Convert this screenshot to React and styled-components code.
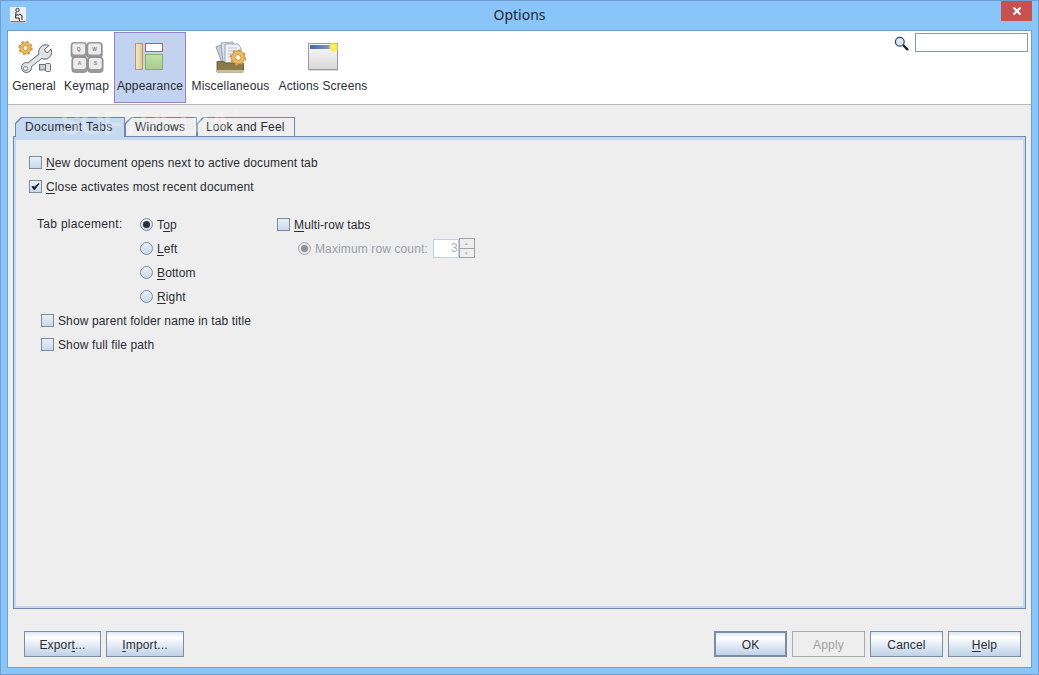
import React from "react";
import styled, { createGlobalStyle } from "styled-components";

const GlobalStyle = createGlobalStyle`
  html, body { margin: 0; padding: 0; height: 100%; overflow: hidden; }
  #root { height: 100%; }
  * { box-sizing: border-box; }
`;

const Window = styled.div`
  width: 1039px;
  height: 675px;
  display: flex;
  flex-direction: column;
  background: #8ac5fa;
  border: 1px solid #6f9fd2;
  font-family: "Liberation Sans", Arial, sans-serif;
  font-size: 12px;
  color: #2b2b33;
`;

const TitleBar = styled.div`
  height: 29px;
  flex: none;
  display: grid;
  grid-template-columns: 1fr auto 1fr;
  align-items: start;
`;

const AppIcon = styled.svg`
  width: 16px;
  height: 16px;
  margin: 6px 0 0 9px;
  display: block;
`;

const Title = styled.div`
  font-family: "Noto Sans", sans-serif;
  font-size: 14px;
  line-height: 28px;
  color: #1c2530;
`;

const CloseButton = styled.div`
  justify-self: end;
  width: 31px;
  height: 20px;
  margin-right: 6px;
  background: #c75050;
  display: flex;
  align-items: center;
  justify-content: center;
`;

const Content = styled.div`
  flex: 1;
  margin: 0 6px 6px 6px;
  border: 1px solid #6c9fd0;
  background: #eeeeee;
  display: flex;
  flex-direction: column;
  min-height: 0;
`;

const Toolbar = styled.div`
  height: 74px;
  flex: none;
  display: flex;
  background: #ffffff;
  border-bottom: 1px solid #b9b9b9;
  padding: 1px 3px 0 0;
`;

const ToolItem = styled.div`
  width: ${(p) => p.$w}px;
  height: 71px;
  margin-right: ${(p) => p.$mr || 0}px;
  display: flex;
  flex-direction: column;
  align-items: center;
  border: 1px solid ${(p) => (p.$active ? "#9a7fc9" : "transparent")};
  background: ${(p) => (p.$active ? "#c1d3ee" : "transparent")};
`;

const ToolIcon = styled.svg`
  width: 36px;
  height: 36px;
  margin-top: 7px;
  display: block;
`;

const ToolLabel = styled.div`
  margin-top: 2px;
  line-height: 16px;
  white-space: nowrap;
  letter-spacing: 0.15px;
`;

const SearchBox = styled.div`
  margin-left: auto;
  display: flex;
  align-items: flex-start;
  gap: 6px;
  padding-top: 1px;
`;

const SearchIcon = styled.svg`
  width: 15px;
  height: 15px;
  margin-top: 3px;
  display: block;
`;

const SearchInput = styled.div`
  width: 113px;
  height: 19px;
  background: #fff;
  border: 1px solid #8b99a5;
`;

const Main = styled.div`
  flex: 1;
  display: flex;
  flex-direction: column;
  position: relative;
  padding: 12px 5px 0 5px;
  min-height: 0;
`;

const Watermark = styled.div`
  position: absolute;
  left: 52px;
  top: 0;
  font-size: 32px;
  font-weight: 700;
  letter-spacing: -1.5px;
  color: rgba(255, 255, 255, 0.3);
  pointer-events: none;
  z-index: 3;
`;

const WatermarkMark = styled.span`
  font-size: 9px;
  font-weight: 400;
  letter-spacing: 0;
  vertical-align: 18px;
  margin-left: 3px;
`;

const TabStrip = styled.div`
  display: flex;
  height: 19px;
  padding-left: 2px;
  flex: none;
`;

const Tab = styled.div`
  width: ${(p) => p.$w}px;
  height: ${(p) => (p.$active ? 20 : 19)}px;
  padding: 1px 1px 0 1px;
  background: #6f88ae;
  position: relative;
  z-index: ${(p) => (p.$active ? 2 : 0)};
  clip-path: polygon(6px 0, 100% 0, 100% 100%, 0 100%, 0 6px);
`;

const TabFace = styled.div`
  height: 100%;
  padding-left: ${(p) => p.$pl || 9}px;
  line-height: 18px;
  letter-spacing: ${(p) => (p.$active ? 0.35 : 0.2)}px;
  white-space: nowrap;
  background: ${(p) => (p.$active ? "#c5d9f0" : "#eeeeee")};
  clip-path: polygon(6px 0, 100% 0, 100% 100%, 0 100%, 0 6px);
`;

const Panel = styled.div`
  flex: 1;
  border: 1px solid #6f88ae;
  min-height: 0;
  display: flex;
`;

const PanelBody = styled.div`
  flex: 1;
  border: solid #c5d9f0;
  border-width: 3px 2px 2px 2px;
  padding: 10px 13px 0 13px;
`;

const CheckRow = styled.div`
  height: 24px;
  display: flex;
  align-items: center;
  gap: 4px;
  padding-left: ${(p) => p.$indent || 0}px;
  letter-spacing: 0.12px;
  white-space: nowrap;
  color: ${(p) => (p.$disabled ? "#9aa0a8" : "inherit")};
`;

const Label = styled.span`
  padding-top: 2px;
`;

const Check = styled.span`
  width: 13px;
  height: 13px;
  flex: none;
  border: 1px solid #7d8c9e;
  background: linear-gradient(#e9f0f8, #c8d8ea);
  display: flex;
  align-items: center;
  justify-content: center;
`;

const Radio = styled.span`
  width: 13px;
  height: 13px;
  flex: none;
  border-radius: 50%;
  border: 1px solid ${(p) => (p.$disabled ? "#a5a9ad" : "#7d8c9e")};
  background: ${(p) =>
    p.$disabled ? "#e3e3e3" : "linear-gradient(#e9f0f8, #c8d8ea)"};
  display: flex;
  align-items: center;
  justify-content: center;

  &::after {
    content: "";
    display: ${(p) => (p.$on ? "block" : "none")};
    width: 7px;
    height: 7px;
    border-radius: 50%;
    background: ${(p) => (p.$disabled ? "#8d9297" : "#2a2f38")};
  }
`;

const Mn = styled.u`
  text-decoration-thickness: 1px;
  text-underline-offset: 2px;
`;

const Spacer = styled.div`
  height: 14px;
`;

const Placement = styled.div`
  display: grid;
  grid-template-columns: 103px 137px 1fr;
  grid-auto-rows: 24px;
  padding-left: 8px;
  align-items: center;
`;

const PlacementLabel = styled.div`
  letter-spacing: 0.3px;
`;

const MaxRow = styled(CheckRow)`
  padding-left: 21px;
`;

const SpinField = styled.span`
  width: 26px;
  height: 19px;
  margin-left: 1px;
  margin-top: 1px;
  background: #fff;
  border: 1px solid #bcd0e8;
  color: #a8b0b8;
  text-align: right;
  line-height: 17px;
`;

const SpinButtons = styled.span`
  width: 16px;
  height: 20px;
  margin-left: -4px;
  border: 1px solid #a3a3a3;
  display: flex;
  flex-direction: column;
`;

const SpinButton = styled.span`
  flex: 1;
  font-size: 5px;
  line-height: 9px;
  text-align: center;
  color: #a8a8a8;
  & + & {
    border-top: 1px solid #a3a3a3;
  }
`;

const Footer = styled.div`
  height: 58px;
  flex: none;
  display: flex;
  align-items: flex-start;
  padding: 22px 10px 0 16px;
  gap: 5px;
`;

const Button = styled.div`
  width: ${(p) => p.$w || 73}px;
  height: 26px;
  padding-top: 1px;
  display: flex;
  align-items: center;
  justify-content: center;
  letter-spacing: 0.15px;
  border: ${(p) => (p.$default ? "2px" : "1px")} solid
    ${(p) => (p.$disabled ? "#a9a9a9" : "#7b8ea5")};
  color: ${(p) => (p.$disabled ? "#a0a0a0" : "inherit")};
  background: ${(p) =>
    p.$disabled
      ? "#eeeeee"
      : "linear-gradient(#dce7f2 0%, #ffffff 22%, #e6eef6 50%, #bfd2e7 100%)"};
`;

const FooterGap = styled.div`
  flex: 1;
`;

function Gear({ cx, cy, r }) {
  const dash = ((2 * Math.PI * (r + 0.6)) / 16).toFixed(2);
  return (
    <g>
      <circle cx={cx} cy={cy} r={r} fill="#efbb62" stroke="#b98535" strokeWidth="0.8" />
      <circle
        cx={cx}
        cy={cy}
        r={r + 0.6}
        fill="none"
        stroke="#cf9a45"
        strokeWidth="2"
        strokeDasharray={`${dash} ${dash}`}
      />
      <circle cx={cx} cy={cy} r={r * 0.45} fill="#fff3da" stroke="#b98535" strokeWidth="0.8" />
    </g>
  );
}

function Key({ x, y, label }) {
  return (
    <g>
      <rect x={x} y={y} width="15.5" height="15.5" rx="3" fill="#9a9a9a" stroke="#858585" strokeWidth="0.7" />
      <rect x={x + 1.4} y={y + 0.9} width="12.7" height="11" rx="2" fill="#ececec" />
      <text x={x + 7.7} y={y + 8} fontSize="5" fontWeight="700" textAnchor="middle" fill="#808080" fontFamily="Liberation Sans">
        {label}
      </text>
    </g>
  );
}

function GeneralIcon() {
  return (
    <ToolIcon viewBox="0 0 36 36">
      <path d="M11 27 L27 14" stroke="#5f6468" strokeWidth="6" strokeLinecap="round" />
      <path
        d="M33 5.5 L28.5 9.5 L29.5 12 L32 12.5 L35 9 A7 7 0 0 1 27 19 A7 7 0 0 1 23 10 A7 7 0 0 1 33 5.5 Z"
        fill="#e2e5e7"
        stroke="#5f6468"
        strokeWidth="1"
        strokeLinejoin="round"
      />
      <circle cx="10.5" cy="27.5" r="5" fill="#e2e5e7" stroke="#5f6468" strokeWidth="1" />
      <path d="M11 27 L26 15" stroke="#e2e5e7" strokeWidth="4.2" strokeLinecap="round" />
      <circle cx="9.5" cy="28.5" r="2" fill="#fff" stroke="#5f6468" strokeWidth="0.8" />
      <rect x="23.5" y="24.5" width="6" height="5.5" fill="#c9cccf" stroke="#5f6468" strokeWidth="0.9" />
      <rect x="29.5" y="23.5" width="5" height="8" rx="1" fill="#e2e5e7" stroke="#5f6468" strokeWidth="0.9" />
      <Gear cx={9.5} cy={8} r={5.6} />
    </ToolIcon>
  );
}

function KeymapIcon() {
  return (
    <ToolIcon viewBox="0 0 36 36">
      <Key x={2} y={2.5} label="Q" />
      <Key x={17.8} y={2.5} label="W" />
      <Key x={2.8} y={17} label="A" />
      <Key x={18.6} y={17} label="S" />
    </ToolIcon>
  );
}

function AppearanceIcon() {
  return (
    <ToolIcon viewBox="0 0 36 36">
      <defs>
        <linearGradient id="tan" x1="0" x2="1" y1="0" y2="0">
          <stop offset="0" stopColor="#f5e8cc" />
          <stop offset="1" stopColor="#e0c796" />
        </linearGradient>
        <linearGradient id="grn" x1="0" x2="0" y1="0" y2="1">
          <stop offset="0" stopColor="#c4dfaa" />
          <stop offset="1" stopColor="#a9cc88" />
        </linearGradient>
      </defs>
      <rect x="3.5" y="3.5" width="7" height="26" fill="url(#tan)" stroke="#b6985c" />
      <rect x="13.5" y="3.5" width="17" height="8" fill="#fff" stroke="#c9574e" />
      <rect x="13.5" y="14.5" width="17" height="15" fill="url(#grn)" stroke="#8bad62" />
    </ToolIcon>
  );
}

function MiscIcon() {
  return (
    <ToolIcon viewBox="0 0 36 36">
      <path d="M3 7 L11 4 L17 21 L9 23 Z" fill="#c5cfdc" stroke="#7f8a98" strokeWidth="0.8" />
      <path d="M8 3 L20 2 L24 21 L10 22 Z" fill="#dde3ec" stroke="#8a94a2" strokeWidth="0.8" />
      <path d="M12 4 H25 L28 8 V23 H12 Z" fill="#eef1f5" stroke="#8a94a2" strokeWidth="0.8" />
      <path d="M15 8 H24 M15 11 H24 M15 14 H20 M15 17 H18" stroke="#b3bcc8" strokeWidth="0.8" />
      <path d="M4 21.5 H10 L12 23 H30.5 V32 H4 Z" fill="#8b7b48" stroke="#5c5026" strokeWidth="0.8" />
      <rect x="4" y="30" width="27" height="2" fill="#c9c09a" />
      <Gear cx={25} cy={17.5} r={6.6} />
    </ToolIcon>
  );
}

function ActionsIcon() {
  return (
    <ToolIcon viewBox="0 0 36 36">
      <defs>
        <linearGradient id="scr" x1="0" x2="0" y1="0" y2="1">
          <stop offset="0" stopColor="#fbfbfb" />
          <stop offset="1" stopColor="#d8d8d8" />
        </linearGradient>
        <linearGradient id="bar" x1="0" x2="1" y1="0" y2="0">
          <stop offset="0" stopColor="#46689f" />
          <stop offset="1" stopColor="#8fa6c8" />
        </linearGradient>
        <radialGradient id="glow">
          <stop offset="0" stopColor="#fff8a0" />
          <stop offset="0.55" stopColor="#f5e73c" />
          <stop offset="1" stopColor="#f5e73c" stopOpacity="0" />
        </radialGradient>
      </defs>
      <rect x="3.5" y="3.5" width="29" height="26" fill="url(#scr)" stroke="#9c9c9c" />
      <rect x="5" y="5" width="26" height="4" fill="url(#bar)" />
      <rect x="4" y="30" width="29" height="1" fill="#d5d5d5" />
      <circle cx="28.5" cy="7" r="5.5" fill="url(#glow)" />
    </ToolIcon>
  );
}

const checkMark = (
  <svg width="11" height="11" viewBox="0 0 11 11">
    <path d="M2 5.5 L4.3 9 L9 2.5 L4.6 6 Z" fill="#1f2228" stroke="#1f2228" strokeWidth="1" />
  </svg>
);

export default function App() {
  return (
    <Window>
      <GlobalStyle />
      <TitleBar>
        <AppIcon viewBox="0 0 16 16">
          <rect width="16" height="16" fill="#eef1f4" />
          <circle cx="7.5" cy="3" r="1.7" fill="none" stroke="#222" strokeWidth="0.9" />
          <path d="M6 5 L5.5 11 L9 11 L9.5 14 M9 7 L12 8.5 L12 13 M6 8 L9 8" fill="none" stroke="#222" strokeWidth="1" />
          <path d="M0.5 14.8 L15.5 14.8" stroke="#333" strokeWidth="0.9" />
        </AppIcon>
        <Title>Options</Title>
        <CloseButton>
          <svg width="10" height="10" viewBox="0 0 10 10">
            <path d="M1.5 1.5 L8.5 8.5 M8.5 1.5 L1.5 8.5" stroke="#fff" strokeWidth="2" />
          </svg>
        </CloseButton>
      </TitleBar>
      <Content>
        <Toolbar>
          <ToolItem $w={52}>
            <GeneralIcon />
            <ToolLabel>General</ToolLabel>
          </ToolItem>
          <ToolItem $w={53} $mr={1}>
            <KeymapIcon />
            <ToolLabel>Keymap</ToolLabel>
          </ToolItem>
          <ToolItem $w={72} $active>
            <AppearanceIcon />
            <ToolLabel>Appearance</ToolLabel>
          </ToolItem>
          <ToolItem $w={89}>
            <MiscIcon />
            <ToolLabel>Miscellaneous</ToolLabel>
          </ToolItem>
          <ToolItem $w={96}>
            <ActionsIcon />
            <ToolLabel>Actions Screens</ToolLabel>
          </ToolItem>
          <SearchBox>
            <SearchIcon viewBox="0 0 15 15">
              <path d="M9 9 L14 14" stroke="#1d1d1d" strokeWidth="2.4" />
              <circle cx="5.8" cy="5.8" r="4.4" fill="#d5e8f7" stroke="#3c4a58" strokeWidth="1.3" />
            </SearchIcon>
            <SearchInput />
          </SearchBox>
        </Toolbar>
        <Main>
          <Watermark>
            SOFTPEDIA<WatermarkMark>®</WatermarkMark>
          </Watermark>
          <TabStrip>
            <Tab $w={110} $active>
              <TabFace $active>Document Tabs</TabFace>
            </Tab>
            <Tab $w={72}>
              <TabFace>Windows</TabFace>
            </Tab>
            <Tab $w={98}>
              <TabFace $pl={8}>Look and Feel</TabFace>
            </Tab>
          </TabStrip>
          <Panel>
            <PanelBody>
              <CheckRow>
                <Check />
                <Label>
                  <Mn>N</Mn>ew document opens next to active document tab
                </Label>
              </CheckRow>
              <CheckRow>
                <Check>{checkMark}</Check>
                <Label>
                  <Mn>C</Mn>lose activates most recent document
                </Label>
              </CheckRow>
              <Spacer />
              <Placement>
                <PlacementLabel>Tab placement:</PlacementLabel>
                <CheckRow>
                  <Radio $on />
                  <Label>
                    T<Mn>o</Mn>p
                  </Label>
                </CheckRow>
                <CheckRow>
                  <Check />
                  <Label>
                    <Mn>M</Mn>ulti-row tabs
                  </Label>
                </CheckRow>
                <span />
                <CheckRow>
                  <Radio />
                  <Label>
                    <Mn>L</Mn>eft
                  </Label>
                </CheckRow>
                <MaxRow $disabled>
                  <Radio $on $disabled />
                  <Label>Maximum row count:</Label>
                  <SpinField>3</SpinField>
                  <SpinButtons>
                    <SpinButton>▴</SpinButton>
                    <SpinButton>▾</SpinButton>
                  </SpinButtons>
                </MaxRow>
                <span />
                <CheckRow>
                  <Radio />
                  <Label>
                    <Mn>B</Mn>ottom
                  </Label>
                </CheckRow>
                <span />
                <span />
                <CheckRow>
                  <Radio />
                  <Label>
                    <Mn>R</Mn>ight
                  </Label>
                </CheckRow>
                <span />
              </Placement>
              <CheckRow $indent={12}>
                <Check />
                <Label>Show parent folder name in tab title</Label>
              </CheckRow>
              <CheckRow $indent={12}>
                <Check />
                <Label>Show full file path</Label>
              </CheckRow>
            </PanelBody>
          </Panel>
        </Main>
        <Footer>
          <Button $w={77}>
            <span>
              Expor<Mn>t</Mn>...
            </span>
          </Button>
          <Button $w={78}>
            <span>
              <Mn>I</Mn>mport...
            </span>
          </Button>
          <FooterGap />
          <Button $default>OK</Button>
          <Button $disabled>Apply</Button>
          <Button>Cancel</Button>
          <Button>
            <span>
              <Mn>H</Mn>elp
            </span>
          </Button>
        </Footer>
      </Content>
    </Window>
  );
}
